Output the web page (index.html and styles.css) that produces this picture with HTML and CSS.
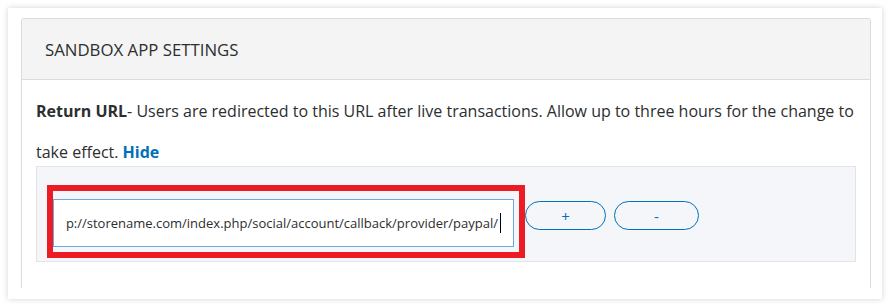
FILE: index.html
```html
<!DOCTYPE html>
<html lang="en">
<head>
    <meta charset="UTF-8">
    <meta name="viewport" content="width=device-width, initial-scale=1.0">
    <title>Sandbox App Settings</title>
    <link rel="stylesheet" href="styles.css">
</head>
<body>

<div class="card">
    <div class="panel">
        <!-- panel header -->
        <div class="panel-head">SANDBOX APP SETTINGS</div>

        <div class="panel-body">
            <p class="help">
                <strong>Return URL</strong>- Users are redirected to this URL after live transactions. Allow up to three hours for the change to take effect. <a href="#" class="link">Hide</a>
            </p>

            <div class="url-box">
                <div class="highlight">
                    <div class="url-field">
                        <div class="url-text"><span>http://storename.com/index.php/social/account/callback/provider/paypal/</span><span class="caret"></span></div>
                    </div>
                </div>
                <button class="pill pill-add">+</button>
                <button class="pill pill-remove">-</button>
            </div>
        </div>
    </div>
</div>

</body>
</html>
```

FILE: styles.css
```css
body {
    margin: 0;
    padding: 8px;
    background: #fff;
    font-family: "Open Sans", Lato, Arial, sans-serif;
    color: #2c2e2f;
}
.card {
    width: 874px;
    height: 291px;
    box-sizing: border-box;
    padding: 10px 11px 0 13px;
    background: #fff;
    box-shadow: 0 0 6px rgba(0, 0, 0, 0.18);
}
.panel {
    border: 1px solid #dcdcdc;
    border-bottom: none;
    border-radius: 3px 3px 0 0;
    height: 269px;
}
.panel-head {
    height: 61px;
    box-sizing: border-box;
    padding: 0 23px;
    line-height: 61px;
    background: #f4f4f4;
    border-bottom: 1px solid #dcdcdc;
    font-size: 16.8px;
    color: #2c2e2f;
}
.panel-body {
    padding: 11px 14px 0 14px;
}
.help {
    margin: 0 0 -7px 0;
    font-size: 16px;
    line-height: 41px;
}
.help strong {
    font-weight: bold;
}
.link {
    color: #0070ba;
    font-weight: bold;
    text-decoration: none;
}
.url-box {
    display: flex;
    align-items: flex-start;
    height: 76px;
    padding: 18px 10px 0 10px;
    background: #f5f6fa;
    border: 1px solid #e3e4e8;
}
.highlight {
    border: 6px solid #ec1c24;
    padding: 8px 5px 5px 0;
}
.url-field {
    width: 461px;
    height: 48px;
    padding: 0 12px;
    box-sizing: border-box;
    background: #fff;
    border: 1px solid #6aaae0;
    display: flex;
    align-items: center;
}
.url-text {
    flex: 1;
    display: flex;
    justify-content: flex-end;
    align-items: center;
    overflow: hidden;
    white-space: nowrap;
    font-size: 13px;
    color: #2c2e2f;
}
.caret {
    display: inline-block;
    flex: none;
    width: 1px;
    height: 20px;
    margin-left: 2px;
    background: #000;
}
.pill {
    margin-top: 16px;
    height: 29px;
    border: 1px solid #0070ba;
    border-radius: 15px;
    background: transparent;
    color: #0070ba;
    font-family: "Open Sans", Arial, sans-serif;
    font-size: 15px;
    cursor: pointer;
    padding: 0;
}
.pill-add {
    width: 81px;
}
.pill-remove {
    width: 85px;
    margin-left: 8px;
}
```
